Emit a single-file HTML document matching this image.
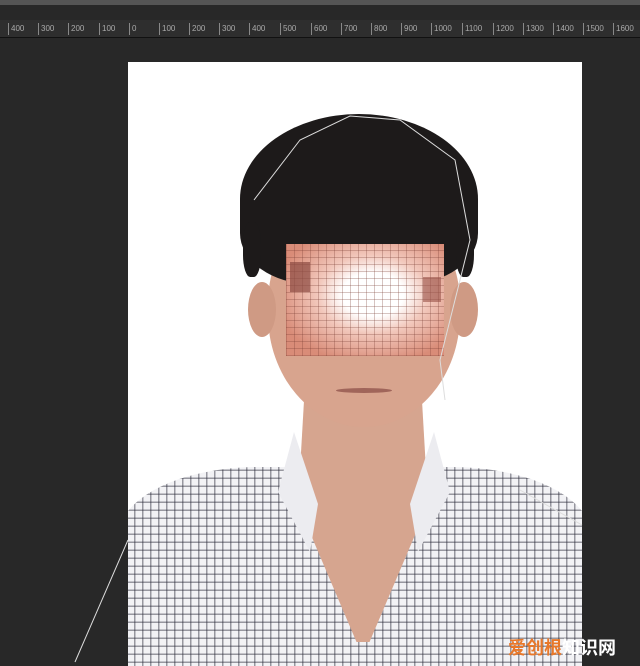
<!DOCTYPE html>
<html><head><meta charset="utf-8"><style>
*{margin:0;padding:0;box-sizing:border-box}
body{width:640px;height:666px;background:#282828;position:relative;overflow:hidden;font-family:"Liberation Sans",sans-serif}
.top{position:absolute;left:0;top:0;width:640px;height:5px;background:#555}
.ruler{position:absolute;left:0;top:20px;width:640px;height:18px;background:#2e2e2e;border-bottom:1px solid #111}
.ruler span{position:absolute;top:3px;font-size:8px;color:#aaa;border-left:1px solid #888;padding-left:2px;height:12px;line-height:12px}
.canvas{position:absolute;left:128px;top:62px;width:454px;height:604px;background:#fff;overflow:hidden}
.a{position:absolute}
.wm{position:absolute;right:24px;bottom:6px;font-family:"Liberation Sans","Noto Sans CJK SC",sans-serif;font-size:18px;font-weight:bold}
</style></head><body>
<div class="top"></div>
<div class="ruler">
<span style="left:8px">400</span><span style="left:38px">300</span><span style="left:68px">200</span><span style="left:99px">100</span><span style="left:129px">0</span><span style="left:159px">100</span><span style="left:189px">200</span><span style="left:219px">300</span><span style="left:249px">400</span><span style="left:280px">500</span><span style="left:311px">600</span><span style="left:341px">700</span><span style="left:371px">800</span><span style="left:401px">900</span><span style="left:431px">1000</span><span style="left:462px">1100</span><span style="left:493px">1200</span><span style="left:523px">1300</span><span style="left:553px">1400</span><span style="left:583px">1500</span><span style="left:613px">1600</span>
</div>
<div class="canvas">
 <!-- shirt -->
 <div class="a" style="left:-10px;top:405px;width:474px;height:220px;border-radius:140px 140px 0 0/70px 70px 0 0;background:#f2f2f5;background-image:repeating-linear-gradient(90deg,rgba(40,40,55,.45) 0 1.5px,transparent 1.5px 8px),repeating-linear-gradient(0deg,rgba(40,40,55,.45) 0 1.5px,transparent 1.5px 8px)"></div>
 <!-- neck -->
 <div class="a" style="left:170px;top:330px;width:130px;height:250px;background:#d6a58f;clip-path:polygon(5% 0,95% 0,100% 45%,55% 100%,45% 100%,0 45%)"></div>
 <!-- collar -->
 <div class="a" style="left:150px;top:370px;width:40px;height:120px;background:#ececf0;clip-path:polygon(40% 0,100% 60%,80% 100%,0 50%)"></div>
 <div class="a" style="left:282px;top:370px;width:40px;height:120px;background:#ececf0;clip-path:polygon(60% 0,100% 50%,20% 100%,0 60%)"></div>
 <!-- face -->
 <div class="a" style="left:140px;top:140px;width:192px;height:225px;border-radius:45% 45% 50% 50%;background:#d8a48e"></div>
 <div class="a" style="left:120px;top:220px;width:28px;height:55px;border-radius:50%;background:#cf9a84"></div>
 <div class="a" style="left:322px;top:220px;width:28px;height:55px;border-radius:50%;background:#cf9a84"></div>
 <!-- hair -->
 <div class="a" style="left:112px;top:52px;width:238px;height:170px;border-radius:50% 50% 30% 30%;background:#1d1a1a"></div>
 <div class="a" style="left:115px;top:160px;width:18px;height:55px;background:#1d1a1a;border-radius:40%"></div>
 <div class="a" style="left:328px;top:160px;width:18px;height:55px;background:#1d1a1a;border-radius:40%"></div>
 <!-- mouth -->
 <div class="a" style="left:208px;top:326px;width:56px;height:5px;border-radius:50%;background:#a0655a"></div>
 <!-- mosaic -->
 <div class="a" style="left:158px;top:182px;width:158px;height:112px;background:radial-gradient(ellipse at 55% 45%,#fff 0 25%,#f2c8bc 45%,#d98c78 80%);background-color:#e9a795"></div>
 <div class="a" style="left:158px;top:182px;width:158px;height:112px;background-image:repeating-linear-gradient(90deg,rgba(120,60,50,.3) 0 1px,transparent 1px 8px),repeating-linear-gradient(0deg,rgba(120,60,50,.3) 0 1px,transparent 1px 7px)"></div>
 <div class="a" style="left:162px;top:200px;width:20px;height:30px;background:#8c4a42;opacity:.7"></div>
 <div class="a" style="left:295px;top:215px;width:18px;height:25px;background:#9a5248;opacity:.6"></div>
</div>
<svg class="a" style="left:0;top:0" width="640" height="666"><path d="M75,662 L128,540 M254,200 L300,140 L350,116 L400,120 L455,160 L470,240 L440,360 L445,400 M582,525 L520,490" stroke="#ddd" stroke-width="1" fill="none"/></svg>
<div class="wm"><span style="color:#e8782a">爱创根</span><span style="color:#fff">知识网</span></div>
</body></html>
